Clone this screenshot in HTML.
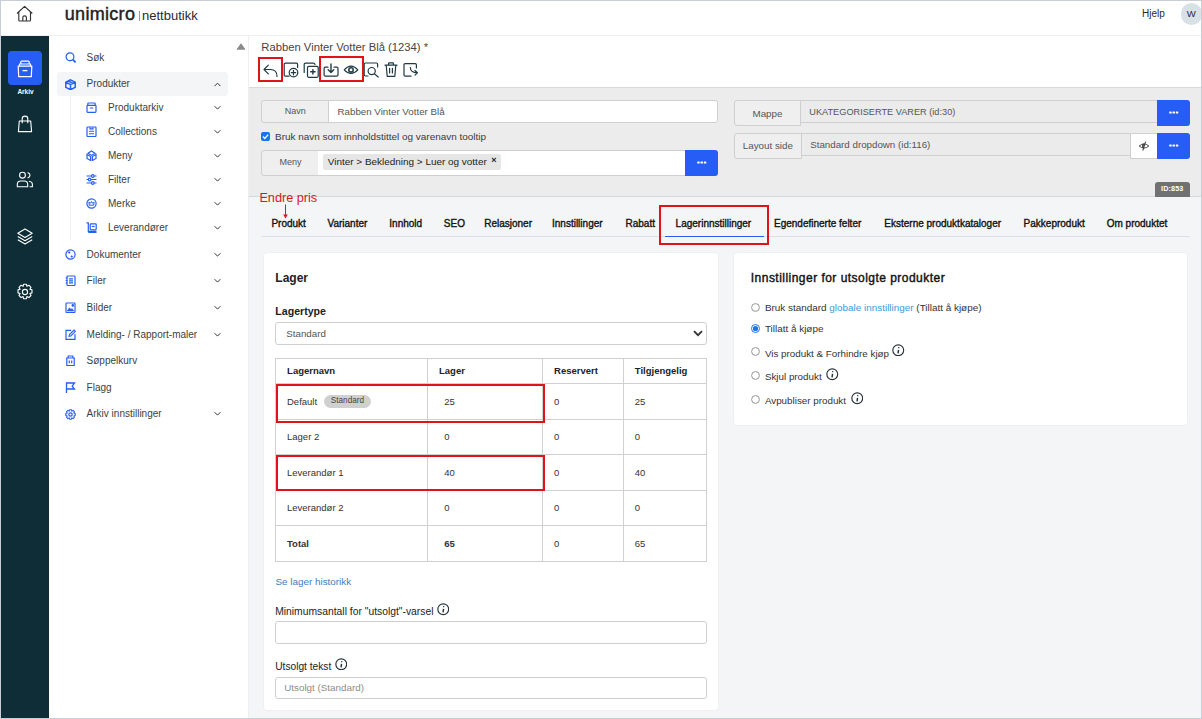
<!DOCTYPE html>
<html><head><meta charset="utf-8">
<style>
*{box-sizing:border-box;margin:0;padding:0}
html,body{width:1202px;height:719px;overflow:hidden;background:#fff}
body{font-family:"Liberation Sans",sans-serif;position:relative;color:#222}
.a{position:absolute}
.t{position:absolute;white-space:nowrap;line-height:1}
#frame{position:absolute;left:0;top:0;width:1202px;height:719px;border:1px solid #c9ced5;pointer-events:none;z-index:50}
#header{position:absolute;left:1px;top:1px;width:1200px;height:35px;background:#fff;border-bottom:1px solid #eceef0}
#side{position:absolute;left:1px;top:36px;width:48px;height:682px;background:#0e2d36}
#nav{position:absolute;left:49px;top:36px;width:200px;height:682px;background:#fff;border-right:1px solid #eceef1}
.nv{position:absolute;font-size:10px;color:#3a3f44;white-space:nowrap;line-height:1}
.chev{position:absolute;width:6px;height:4px}
#main{position:absolute;left:249px;top:36px;width:952px;height:682px;background:#f4f5f7}
</style></head><body>
<div id="frame"></div>
<div id="header">
  <svg class="a" style="left:15px;top:4px" width="18" height="18" viewBox="0 0 18 18" fill="none" stroke="#333" stroke-width="1.15" stroke-linejoin="round"><path d="M1 8.5 L8.6 1.3 L16.3 8.5 M2.8 7 V15 Q2.8 16 3.8 16 H13.5 Q14.5 16 14.5 15 V7 M6.8 16 V12.6 Q6.8 10.8 8.6 10.8 Q10.4 10.8 10.4 12.6 V16"/></svg>
  <div class="t" style="left:63.8px;top:3.6px;font-size:18px;font-weight:400;color:#222;letter-spacing:0.3px;-webkit-text-stroke:0.45px #222">unimicro</div>
  <div class="a" style="left:138px;top:10px;width:1px;height:10px;background:#999"></div>
  <div class="t" style="left:141px;top:8px;font-size:13px;color:#2b2b2b">nettbutikk</div>
  <div class="t" style="left:1141px;top:8.2px;font-size:10px;color:#1e2a3a">Hjelp</div>
  <div class="a" style="left:1179.8px;top:2px;width:21.5px;height:21.5px;border-radius:50%;background:#d8e1e5"></div>
  <div class="t" style="left:1185.8px;top:8.3px;font-size:9.6px;color:#1e2a3a">W</div>
</div>
<div id="side">
  <div class="a" style="left:7px;top:15px;width:34px;height:34px;border-radius:4px;background:#265ef5"></div>
  <svg class="a" style="left:16px;top:23.8px" width="16" height="18" viewBox="0 0 16 18" fill="none" stroke="#fff" stroke-width="1.2" stroke-linejoin="round"><path d="M1.2 6.2 L1.7 16.6 H14.3 L14.8 6.2 Z M3.8 3.9 V2.1 Q3.8 1.2 4.7 1.2 H11.3 Q12.2 1.2 12.2 2.1 V3.9 M2.5 6.2 V4 H13.5 V6.2 M5.6 10.6 H10.4" /></svg>
  <div class="t" style="left:16.4px;top:52.9px;font-size:6.5px;font-weight:700;color:#fff">Arkiv</div>
  <svg class="a" style="left:15px;top:79px" width="18" height="18" viewBox="0 0 18 18" fill="none" stroke="#fff" stroke-width="1.1" stroke-linejoin="round"><path d="M3.3 6 H14.7 L15.6 16.6 H2.4 Z M6.2 8.2 V3.8 Q6.2 1.1 9 1.1 Q11.8 1.1 11.8 3.8 V8.2"/></svg>
  <svg class="a" style="left:15.4px;top:135px" width="18" height="17" viewBox="0 0 18 17" fill="none" stroke="#fff" stroke-width="1.1" stroke-linejoin="round"><circle cx="6.5" cy="4.2" r="2.9"/><path d="M11.6 1.5 Q14 2.3 14 4.2 Q14 6.1 11.6 6.9 M1.3 15.7 V13.5 Q1.3 10 4.8 10 H8.2 Q11.7 10 11.7 13.5 V15.7 Z M12.9 10.2 Q16.4 10.6 16.4 13.5 V15.7 H13.6"/></svg>
  <svg class="a" style="left:15px;top:191.5px" width="18" height="18" viewBox="0 0 18 18" fill="none" stroke="#fff" stroke-width="1.1" stroke-linejoin="round"><path d="M9 1 L16.2 5.2 L9 9.4 L1.8 5.2 Z M1.8 8.5 L9 12.7 L16.2 8.5 M1.8 11.8 L9 16 L16.2 11.8"/></svg>
  <svg class="a" style="left:15px;top:247.3px" width="18" height="18" viewBox="0 0 18 18" fill="none" stroke="#fff" stroke-width="1.1" stroke-linejoin="round"><circle cx="9" cy="9" r="2.6"/><path d="M7.6 1.2 H10.4 L10.9 3.3 L12.9 2.2 L15 4.3 L13.9 6.3 L16 6.9 V9.9 L13.9 10.5 L15 12.5 L12.9 14.6 L10.9 13.5 L10.4 15.8 H7.6 L7.1 13.5 L5.1 14.6 L3 12.5 L4.1 10.5 L2 9.9 V6.9 L4.1 6.3 L3 4.3 L5.1 2.2 L7.1 3.3 Z"/></svg>
</div>
<div id="nav">
<svg class="a" style="left:187px;top:7px" width="10" height="7" viewBox="0 0 10 7"><path d="M5 0.8 L9 6.3 H1 Z" fill="#8a8a8a" stroke="#8a8a8a" stroke-width="0.8" stroke-linejoin="round"/></svg>
<svg class="a" style="left:15.5px;top:16px" width="11" height="11" viewBox="0 0 11 11" fill="none" stroke="#265ef5" stroke-width="1.2"><circle cx="5" cy="4.8" r="3.9"/><path d="M7.8 7.6 L10.6 10.4" stroke-width="1.8"/></svg>
<div class="nv" style="left:37.599999999999994px;top:16.83px">Søk</div>
<div class="a" style="left:8px;top:36px;width:171px;height:24px;border-radius:4px;background:#f4f5f7"></div>
<svg class="a" style="left:15.5px;top:42.5px" width="11" height="11" viewBox="0 0 11 11" fill="none" stroke="#265ef5" stroke-width="1.2"><path d="M5.5 0.8 L10.2 3.2 V8.3 L5.5 10.7 L0.8 8.3 V3.2 Z M0.8 3.2 L5.5 5.6 L10.2 3.2 M5.5 5.6 V10.7 M3.2 2 L7.9 4.4" stroke-width="1.5"/></svg>
<div class="nv" style="left:37.599999999999994px;top:42.73px">Produkter</div>
<svg class="a" style="left:164.7px;top:45.85px" width="7" height="5.3" viewBox="0 0 7 5.3" fill="none" stroke="#333" stroke-width="1"><path d="M0.6 4.1 L3.5 1.2 L6.4 4.1"/></svg>
<div class="a" style="left:21px;top:60px;width:1px;height:144px;background:#eef0f2"></div>
<svg class="a" style="left:36.599999999999994px;top:66.2px" width="11" height="11" viewBox="0 0 11 11" fill="none" stroke="#265ef5" stroke-width="1.2"><rect x="1" y="3.3" width="9" height="7" rx="0.8"/><path d="M1.8 3.3 V1.8 Q1.8 1 2.6 1 H8.4 Q9.2 1 9.2 1.8 V3.3 M3.8 6 H7.2"/></svg>
<div class="nv" style="left:59px;top:66.83px">Produktarkiv</div>
<svg class="a" style="left:164.7px;top:68.75px" width="7" height="5.3" viewBox="0 0 7 5.3" fill="none" stroke="#333" stroke-width="1"><path d="M0.6 1.2 L3.5 4.1 L6.4 1.2"/></svg>
<svg class="a" style="left:36.599999999999994px;top:90.19999999999999px" width="11" height="11" viewBox="0 0 11 11" fill="none" stroke="#265ef5" stroke-width="1.2"><rect x="1" y="1" width="9" height="9.5" rx="0.8"/><path d="M4 1.2 V2.9 H7 V1.2 M2.9 5.3 H8.1 M2.9 7.7 H8.1" stroke-width="1.1"/></svg>
<div class="nv" style="left:59px;top:90.83px">Collections</div>
<svg class="a" style="left:164.7px;top:92.75px" width="7" height="5.3" viewBox="0 0 7 5.3" fill="none" stroke="#333" stroke-width="1"><path d="M0.6 1.2 L3.5 4.1 L6.4 1.2"/></svg>
<svg class="a" style="left:36.599999999999994px;top:114.0px" width="11" height="11" viewBox="0 0 11 11" fill="none" stroke="#265ef5" stroke-width="1.2"><path d="M5.5 1 L9 3.2 L5.5 5.4 L2 3.2 Z M1 4.5 L4.6 6.5 V10.5 L1 8.5 Z M10 4.5 L6.4 6.5 V10.5 L10 8.5 Z"/></svg>
<div class="nv" style="left:59px;top:114.63px">Meny</div>
<svg class="a" style="left:164.7px;top:116.55px" width="7" height="5.3" viewBox="0 0 7 5.3" fill="none" stroke="#333" stroke-width="1"><path d="M0.6 1.2 L3.5 4.1 L6.4 1.2"/></svg>
<svg class="a" style="left:36.599999999999994px;top:138.2px" width="11" height="11" viewBox="0 0 11 11" fill="none" stroke="#265ef5" stroke-width="1.2"><path d="M0.5 2 H10.5 M0.5 5.5 H10.5 M0.5 9 H10.5"/><circle cx="6.8" cy="2" r="1.3" fill="#fff"/><circle cx="3.6" cy="5.5" r="1.3" fill="#fff"/><circle cx="6.8" cy="9" r="1.3" fill="#fff"/></svg>
<div class="nv" style="left:59px;top:138.83px">Filter</div>
<svg class="a" style="left:164.7px;top:140.75px" width="7" height="5.3" viewBox="0 0 7 5.3" fill="none" stroke="#333" stroke-width="1"><path d="M0.6 1.2 L3.5 4.1 L6.4 1.2"/></svg>
<svg class="a" style="left:36.599999999999994px;top:162.4px" width="11" height="11" viewBox="0 0 11 11" fill="none" stroke="#265ef5" stroke-width="1.2"><circle cx="5.5" cy="5.5" r="4.6"/><path d="M3.2 7.2 L3 4 L4.5 5.2 L5.5 3.5 L6.5 5.2 L8 4 L7.8 7.2 Z" stroke-width="1"/></svg>
<div class="nv" style="left:59px;top:163.03px">Merke</div>
<svg class="a" style="left:164.7px;top:164.95px" width="7" height="5.3" viewBox="0 0 7 5.3" fill="none" stroke="#333" stroke-width="1"><path d="M0.6 1.2 L3.5 4.1 L6.4 1.2"/></svg>
<svg class="a" style="left:36.599999999999994px;top:186.0px" width="11" height="11" viewBox="0 0 11 11" fill="none" stroke="#265ef5" stroke-width="1.2"><path d="M0.5 0.8 H2.3 V9.3 H10.5 M2.3 10.5 H10.5"/><rect x="4.2" y="1.8" width="6" height="6" rx="0.8"/><path d="M5.8 4.5 H8.6"/></svg>
<div class="nv" style="left:59px;top:186.63px">Leverandører</div>
<svg class="a" style="left:164.7px;top:188.55px" width="7" height="5.3" viewBox="0 0 7 5.3" fill="none" stroke="#333" stroke-width="1"><path d="M0.6 1.2 L3.5 4.1 L6.4 1.2"/></svg>
<svg class="a" style="left:15.799999999999997px;top:213.2px" width="11" height="11" viewBox="0 0 11 11" fill="none" stroke="#265ef5" stroke-width="1.2"><circle cx="5.5" cy="5.5" r="4.6"/><path d="M3.5 2.8 L5 4.2 M6 6.8 L7.5 8.2" stroke-width="1.8"/></svg>
<div class="nv" style="left:37.599999999999994px;top:213.84px">Dokumenter</div>
<svg class="a" style="left:164.7px;top:215.75px" width="7" height="5.3" viewBox="0 0 7 5.3" fill="none" stroke="#333" stroke-width="1"><path d="M0.6 1.2 L3.5 4.1 L6.4 1.2"/></svg>
<svg class="a" style="left:15.799999999999997px;top:239.10000000000002px" width="11" height="11" viewBox="0 0 11 11" fill="none" stroke="#265ef5" stroke-width="1.2"><rect x="2" y="1" width="8" height="9.5" rx="0.8"/><path d="M0.6 3 H2.4 M0.6 5.5 H2.4 M0.6 8 H2.4 M4 3.8 H8 M4 5.8 H8 M4 7.8 H8"/></svg>
<div class="nv" style="left:37.599999999999994px;top:239.74px">Filer</div>
<svg class="a" style="left:164.7px;top:241.65px" width="7" height="5.3" viewBox="0 0 7 5.3" fill="none" stroke="#333" stroke-width="1"><path d="M0.6 1.2 L3.5 4.1 L6.4 1.2"/></svg>
<svg class="a" style="left:15.799999999999997px;top:266.1px" width="11" height="11" viewBox="0 0 11 11" fill="none" stroke="#265ef5" stroke-width="1.2"><rect x="1" y="1" width="9" height="9.5" rx="0.8"/><path d="M2.2 9 L4.5 5.8 L6 7.5 L7 6.5 L8.8 9 Z" fill="#265ef5" stroke-width="0.6"/><circle cx="7.8" cy="3.4" r="0.7" fill="#265ef5"/></svg>
<div class="nv" style="left:37.599999999999994px;top:266.74px">Bilder</div>
<svg class="a" style="left:164.7px;top:268.65px" width="7" height="5.3" viewBox="0 0 7 5.3" fill="none" stroke="#333" stroke-width="1"><path d="M0.6 1.2 L3.5 4.1 L6.4 1.2"/></svg>
<svg class="a" style="left:15.799999999999997px;top:293.1px" width="11" height="11" viewBox="0 0 11 11" fill="none" stroke="#265ef5" stroke-width="1.2"><path d="M6 1.3 H1 V10.3 H10 V5.3"/><path d="M4 7.3 L4.4 5.6 L9 1 L10.4 2.4 L5.8 7 Z" stroke-width="1.1"/></svg>
<div class="nv" style="left:37.599999999999994px;top:293.74px">Melding- / Rapport-maler</div>
<svg class="a" style="left:164.7px;top:295.65px" width="7" height="5.3" viewBox="0 0 7 5.3" fill="none" stroke="#333" stroke-width="1"><path d="M0.6 1.2 L3.5 4.1 L6.4 1.2"/></svg>
<svg class="a" style="left:15.799999999999997px;top:319.3px" width="11" height="11" viewBox="0 0 11 11" fill="none" stroke="#265ef5" stroke-width="1.2"><path d="M1 3 H10 M3.2 3 V1 H7.8 V3 M1.8 3 V10.5 H9.2 V3 M4.3 5.5 V8.3 M6.7 5.5 V8.3"/></svg>
<div class="nv" style="left:37.599999999999994px;top:319.94px">Søppelkurv</div>
<svg class="a" style="left:15.799999999999997px;top:346.3px" width="11" height="11" viewBox="0 0 11 11" fill="none" stroke="#265ef5" stroke-width="1.2"><path d="M1.5 11 V1 H9.5 L7.2 4.2 L9.5 7 H1.5" stroke-width="1.3"/></svg>
<div class="nv" style="left:37.599999999999994px;top:346.94px">Flagg</div>
<svg class="a" style="left:15.799999999999997px;top:372.8px" width="11" height="11" viewBox="0 0 11 11" fill="none" stroke="#265ef5" stroke-width="1.2"><circle cx="5.5" cy="5.5" r="1.7"/><path d="M4.6 0.8 H6.4 L6.8 2.1 L8.1 1.4 L9.5 2.8 L8.8 4.1 L10.2 4.6 V6.4 L8.8 6.9 L9.5 8.2 L8.1 9.6 L6.8 8.9 L6.4 10.2 H4.6 L4.2 8.9 L2.9 9.6 L1.5 8.2 L2.2 6.9 L0.8 6.4 V4.6 L2.2 4.1 L1.5 2.8 L2.9 1.4 L4.2 2.1 Z" stroke-width="1.1" stroke-linejoin="round"/></svg>
<div class="nv" style="left:37.599999999999994px;top:373.44px">Arkiv innstillinger</div>
<svg class="a" style="left:164.7px;top:375.35px" width="7" height="5.3" viewBox="0 0 7 5.3" fill="none" stroke="#333" stroke-width="1"><path d="M0.6 1.2 L3.5 4.1 L6.4 1.2"/></svg>
</div>
<div id="main"></div>

<div class="a" style="left:249px;top:36px;width:952px;height:52px;background:#fff;border-bottom:1px solid #d9d9d9"></div>
<div class="a" style="left:249px;top:88px;width:952px;height:109px;background:#ececec;border-bottom:1px solid #d8d8d8"></div>
<div class="t" style="left:261.3px;top:41.90px;font-size:11.25px;color:#444">Rabben Vinter Votter Blå (1234) *</div>
<svg class="a" style="left:255px;top:55px" width="170" height="30" viewBox="255 55 170 30" fill="none" stroke="#1f3a44" stroke-width="1.2" stroke-linecap="round" stroke-linejoin="round">
 <path d="M268.3 65.2 L264 69.5 L268.3 73.8 M264 69.5 H270.5 Q277 69.5 277 76.5"/>
 <path d="M289 76.2 H285.5 Q284.2 76.2 284.2 75 V64.3 Q284.2 63.1 285.5 63.1 H296.3 Q297.6 63.1 297.6 64.3 V67.5"/>
 <circle cx="293.5" cy="72.6" r="4.3"/><path d="M293.5 70.4 V74.8 M291.3 72.6 H295.7"/>
 <path d="M304.2 72.5 V64.3 Q304.2 63.1 305.4 63.1 H313.5 Q314.6 63.1 315 64.5"/>
 <rect x="307.5" y="66.3" width="10.7" height="11" rx="1.2"/><path d="M312.9 69.6 V74 M310.7 71.8 H315.1" stroke-width="1.4"/>
 <path d="M328 67.2 H325.3 Q324.1 67.2 324.1 68.4 V74.9 Q324.1 76.1 325.3 76.1 H336.8 Q338 76.1 338 74.9 V68.4 Q338 67.2 336.8 67.2 H334"/>
 <path d="M331 64 V72.5 M328.2 69.8 L331 72.6 L333.8 69.8" stroke-width="1.4"/>
 <path d="M344.2 69.8 Q351 62.6 357.8 69.8 Q351 77 344.2 69.8 Z"/><circle cx="351" cy="69.9" r="2.2" stroke-width="1.5"/>
 <path d="M368 76 H365.4 Q364.2 76 364.2 74.8 V64.2 Q364.2 63 365.4 63 H376.4 Q377.6 63 377.6 64.2 V67"/>
 <circle cx="371.7" cy="71.1" r="3.6"/><path d="M374.4 73.8 L378.2 77"/>
 <path d="M385 65.2 H397 M388.6 65.2 V63.4 Q388.6 62.9 389.1 62.9 H392.9 Q393.4 62.9 393.4 63.4 V65.2 M386.2 65.2 L387.2 76.3 H394.8 L395.8 65.2 M389.6 68.3 V73 M392.4 68.3 V73"/>
 <path d="M416.4 68 V64.8 Q416.4 63.6 415.2 63.6 H405.2 Q404 63.6 404 64.8 V75 Q404 76.2 405.2 76.2 H411"/>
 <path d="M410.3 67.6 Q410.5 72.8 417.2 72.8 M415 70.5 L417.4 72.8 L415 75.2"/>
</svg>
<div class="a" style="left:261px;top:100px;width:68px;height:23px;background:#efefef;border:1px solid #cfcfcf;border-radius:3px 0 0 3px"></div>
<div class="a" style="left:328px;top:100px;width:390px;height:23px;background:#fff;border:1px solid #cfcfcf;border-radius:0 3px 3px 0"></div>
<div class="t" style="left:284.8px;top:107.28px;font-size:9px;color:#555;font-weight:400;">Navn</div>
<div class="t" style="left:337.5px;top:106.75px;font-size:9.75px;color:#555;font-weight:400;">Rabben Vinter Votter Blå</div>
<div class="a" style="left:261px;top:132px;width:9px;height:9px;background:#1a73e8;border-radius:2px"></div>
<svg class="a" style="left:261px;top:132px" width="9" height="9" viewBox="0 0 9 9"><path d="M2 4.6 L3.8 6.4 L7.2 2.6" fill="none" stroke="#fff" stroke-width="1.4"/></svg>
<div class="t" style="left:275px;top:131.78px;font-size:9.95px;color:#3a3a3a;font-weight:400;">Bruk navn som innholdstittel og varenavn tooltip</div>
<div class="a" style="left:261px;top:150px;width:58px;height:26px;background:#efefef;border:1px solid #cfcfcf;border-radius:3px 0 0 3px"></div>
<div class="a" style="left:318px;top:150px;width:368px;height:26px;background:#fff;border:1px solid #cfcfcf;border-left:none"></div>
<div class="t" style="left:279.5px;top:158.38px;font-size:9px;color:#555;font-weight:400;">Meny</div>
<div class="a" style="left:323px;top:154px;width:178px;height:16px;background:#e6e6e6;border-radius:2px"></div>
<div class="t" style="left:327.8px;top:157.28px;font-size:9.95px;color:#222;font-weight:400;">Vinter &gt; Bekledning &gt; Luer og votter</div>
<div class="t" style="left:491.2px;top:156.38px;font-size:9px;color:#222;font-weight:700;">×</div>
<div class="a" style="left:685px;top:150px;width:33px;height:26px;background:#265ef5;border-radius:0 3px 3px 0"></div>
<svg class="a" style="left:697.3px;top:160.7px" width="10" height="3" viewBox="0 0 10 3" fill="#fff"><rect x="0.2" y="0.6" width="2.5" height="1.9" rx="0.5"/><rect x="3.5" y="0.6" width="2.5" height="1.9" rx="0.5"/><rect x="6.8" y="0.6" width="2.5" height="1.9" rx="0.5"/></svg>
<div class="a" style="left:734px;top:100px;width:67px;height:26px;background:#efefef;border:1px solid #cfcfcf;border-radius:3px 0 0 3px"></div>
<div class="a" style="left:800px;top:100px;width:358px;height:23px;background:#ebebeb;border:1px solid #cfcfcf"></div>
<div class="t" style="left:752.5px;top:109.30px;font-size:9.8px;color:#555;font-weight:400;">Mappe</div>
<div class="t" style="left:809.3px;top:107.91px;font-size:9.2px;color:#555;font-weight:400;">UKATEGORISERTE VARER (id:30)</div>
<div class="a" style="left:1157px;top:100px;width:33px;height:26px;background:#265ef5;border-radius:0 3px 3px 0"></div>
<svg class="a" style="left:1169.3px;top:110.7px" width="10" height="3" viewBox="0 0 10 3" fill="#fff"><rect x="0.2" y="0.6" width="2.5" height="1.9" rx="0.5"/><rect x="3.5" y="0.6" width="2.5" height="1.9" rx="0.5"/><rect x="6.8" y="0.6" width="2.5" height="1.9" rx="0.5"/></svg>
<div class="a" style="left:734px;top:133px;width:68px;height:26px;background:#efefef;border:1px solid #cfcfcf;border-radius:3px 0 0 3px"></div>
<div class="a" style="left:801px;top:133px;width:330px;height:23px;background:#ebebeb;border:1px solid #cfcfcf"></div>
<div class="t" style="left:742.8px;top:140.90px;font-size:9.8px;color:#555;font-weight:400;">Layout side</div>
<div class="t" style="left:810.2px;top:140.24px;font-size:9.76px;color:#555;font-weight:400;">Standard dropdown (id:116)</div>
<div class="a" style="left:1130px;top:133px;width:28px;height:26px;background:#fff;border:1px solid #cfcfcf;border-right:none"></div>
<svg class="a" style="left:1138px;top:139.5px" width="12" height="12" viewBox="0 0 12 12" fill="none" stroke="#333" stroke-width="0.9"><path d="M1.2 6 Q6 1.8 10.8 6 Q6 10.2 1.2 6 Z"/><path d="M6.2 3.6 Q4.2 3.6 3.8 6 Q4.2 8 5.4 8.3 Z" fill="#444" stroke="none"/><path d="M7.6 1.6 L4.8 10.6" stroke-width="1"/></svg>
<div class="a" style="left:1157px;top:133px;width:33px;height:26px;background:#265ef5;border-radius:0 3px 3px 0"></div>
<svg class="a" style="left:1169.3px;top:143.7px" width="10" height="3" viewBox="0 0 10 3" fill="#fff"><rect x="0.2" y="0.6" width="2.5" height="1.9" rx="0.5"/><rect x="3.5" y="0.6" width="2.5" height="1.9" rx="0.5"/><rect x="6.8" y="0.6" width="2.5" height="1.9" rx="0.5"/></svg>
<div class="a" style="left:1155px;top:182px;width:35px;height:15px;background:#717171;border-radius:3px 3px 0 0"></div>
<div class="t" style="left:1161px;top:185.21px;font-size:7.2px;color:#fff;font-weight:700;letter-spacing:0.15px">ID:853</div>
<div class="t" style="left:259.4px;top:191.95px;font-size:12.7px;color:#e0131b;font-weight:400;">Endre pris</div>
<svg class="a" style="left:282px;top:204px" width="7" height="15" viewBox="0 0 7 15"><path d="M3.5 0.5 V13" stroke="#e0131b" stroke-width="1"/><path d="M1.2 10.5 L3.5 14.5 L5.8 10.5 Z" fill="#e0131b"/></svg>
<div class="a" style="left:258px;top:57px;width:25px;height:25px;border:2px solid #e0131b"></div>
<div class="a" style="left:319px;top:56px;width:45px;height:26px;border:2px solid #e0131b"></div>

<div class="a" style="left:261px;top:236px;width:929px;height:1px;background:#dcdfe3"></div>
<div class="t" style="left:271.4px;top:218.73px;font-size:10px;color:#111;font-weight:400;-webkit-text-stroke:0.35px #111">Produkt</div>
<div class="t" style="left:327.5px;top:218.73px;font-size:10px;color:#111;font-weight:400;-webkit-text-stroke:0.35px #111">Varianter</div>
<div class="t" style="left:389.3px;top:218.73px;font-size:10px;color:#111;font-weight:400;-webkit-text-stroke:0.35px #111">Innhold</div>
<div class="t" style="left:443.8px;top:218.73px;font-size:10px;color:#111;font-weight:400;-webkit-text-stroke:0.35px #111">SEO</div>
<div class="t" style="left:484.2px;top:218.73px;font-size:10px;color:#111;font-weight:400;-webkit-text-stroke:0.35px #111">Relasjoner</div>
<div class="t" style="left:552px;top:218.73px;font-size:10px;color:#111;font-weight:400;-webkit-text-stroke:0.35px #111">Innstillinger</div>
<div class="t" style="left:625.5px;top:218.73px;font-size:10px;color:#111;font-weight:400;-webkit-text-stroke:0.35px #111">Rabatt</div>
<div class="t" style="left:675.6px;top:218.73px;font-size:10px;color:#111;font-weight:400;-webkit-text-stroke:0.35px #111">Lagerinnstillinger</div>
<div class="t" style="left:774px;top:218.73px;font-size:10px;color:#111;font-weight:400;-webkit-text-stroke:0.35px #111">Egendefinerte felter</div>
<div class="t" style="left:884.3px;top:218.73px;font-size:10px;color:#111;font-weight:400;-webkit-text-stroke:0.35px #111">Eksterne produktkataloger</div>
<div class="t" style="left:1023.6px;top:218.73px;font-size:10px;color:#111;font-weight:400;-webkit-text-stroke:0.35px #111">Pakkeprodukt</div>
<div class="t" style="left:1106.7px;top:218.73px;font-size:10px;color:#111;font-weight:400;-webkit-text-stroke:0.35px #111">Om produktet</div>
<div class="a" style="left:665px;top:236px;width:99px;height:1px;background:#2a5cf2"></div>
<div class="a" style="left:659px;top:205px;width:110px;height:40px;border:2px solid #e0131b"></div>
<div class="a" style="left:264px;top:253px;width:454px;height:457px;background:#fff;border-radius:3.5px;box-shadow:0 0 0 1px #eef0f2"></div>
<div class="t" style="left:275.3px;top:271.84px;font-size:12px;color:#222;font-weight:700;">Lager</div>
<div class="t" style="left:275.3px;top:306.33px;font-size:10.6px;color:#222;font-weight:700;">Lagertype</div>
<div class="a" style="left:275px;top:322px;width:432px;height:23px;background:#fff;border:1px solid #cfcfcf;border-radius:3px"></div>
<div class="t" style="left:286.3px;top:328.75px;font-size:9.75px;color:#555;font-weight:400;">Standard</div>
<svg class="a" style="left:693px;top:330px" width="10" height="7" viewBox="0 0 10 7"><path d="M1 1.2 L5 5.2 L9 1.2" fill="none" stroke="#333" stroke-width="1.8"/></svg>
<div class="a" style="left:275px;top:358px;width:432px;height:204px;border:1px solid #d0d0d0"></div>
<div class="a" style="left:427px;top:358px;width:1px;height:204px;background:#d0d0d0"></div>
<div class="a" style="left:542px;top:358px;width:1px;height:204px;background:#d0d0d0"></div>
<div class="a" style="left:623px;top:358px;width:1px;height:204px;background:#d0d0d0"></div>
<div class="a" style="left:275px;top:383px;width:432px;height:1px;background:#d0d0d0"></div>
<div class="a" style="left:275px;top:419px;width:432px;height:1px;background:#d0d0d0"></div>
<div class="a" style="left:275px;top:454px;width:432px;height:1px;background:#d0d0d0"></div>
<div class="a" style="left:275px;top:490px;width:432px;height:1px;background:#d0d0d0"></div>
<div class="a" style="left:275px;top:525px;width:432px;height:1px;background:#d0d0d0"></div>
<div class="t" style="left:287.1px;top:366.16px;font-size:9.5px;color:#222;font-weight:700;">Lagernavn</div>
<div class="t" style="left:439px;top:366.16px;font-size:9.5px;color:#222;font-weight:700;">Lager</div>
<div class="t" style="left:554.1px;top:366.16px;font-size:9.5px;color:#222;font-weight:700;">Reservert</div>
<div class="t" style="left:634.8px;top:366.16px;font-size:9.5px;color:#222;font-weight:700;">Tilgjengelig</div>
<div class="t" style="left:287px;top:396.86px;font-size:9.5px;color:#333;font-weight:400;">Default</div>
<div class="t" style="left:444.2px;top:396.86px;font-size:9.5px;color:#333;font-weight:400;">25</div>
<div class="t" style="left:554px;top:396.86px;font-size:9.5px;color:#333;font-weight:400;">0</div>
<div class="t" style="left:634.8px;top:396.86px;font-size:9.5px;color:#333;font-weight:400;">25</div>
<div class="t" style="left:287px;top:432.26px;font-size:9.5px;color:#333;font-weight:400;">Lager 2</div>
<div class="t" style="left:444.2px;top:432.26px;font-size:9.5px;color:#333;font-weight:400;">0</div>
<div class="t" style="left:554px;top:432.26px;font-size:9.5px;color:#333;font-weight:400;">0</div>
<div class="t" style="left:634.8px;top:432.26px;font-size:9.5px;color:#333;font-weight:400;">0</div>
<div class="t" style="left:287px;top:467.86px;font-size:9.5px;color:#333;font-weight:400;">Leverandør 1</div>
<div class="t" style="left:444.2px;top:467.86px;font-size:9.5px;color:#333;font-weight:400;">40</div>
<div class="t" style="left:554px;top:467.86px;font-size:9.5px;color:#333;font-weight:400;">0</div>
<div class="t" style="left:634.8px;top:467.86px;font-size:9.5px;color:#333;font-weight:400;">40</div>
<div class="t" style="left:287px;top:503.46px;font-size:9.5px;color:#333;font-weight:400;">Leverandør 2</div>
<div class="t" style="left:444.2px;top:503.46px;font-size:9.5px;color:#333;font-weight:400;">0</div>
<div class="t" style="left:554px;top:503.46px;font-size:9.5px;color:#333;font-weight:400;">0</div>
<div class="t" style="left:634.8px;top:503.46px;font-size:9.5px;color:#333;font-weight:400;">0</div>
<div class="t" style="left:287px;top:539.06px;font-size:9.5px;color:#333;font-weight:700;">Total</div>
<div class="t" style="left:444.2px;top:539.06px;font-size:9.5px;color:#333;font-weight:700;">65</div>
<div class="t" style="left:554px;top:539.06px;font-size:9.5px;color:#333;font-weight:400;">0</div>
<div class="t" style="left:634.8px;top:539.06px;font-size:9.5px;color:#333;font-weight:400;">65</div>
<div class="a" style="left:324px;top:395px;width:47px;height:13px;background:#d0d0d0;border-radius:7px"></div>
<div class="t" style="left:330.8px;top:396.76px;font-size:8.2px;color:#444;font-weight:400;">Standard</div>
<div class="a" style="left:276px;top:384px;width:269px;height:39px;border:2px solid #e0131b"></div>
<div class="a" style="left:276px;top:455px;width:269px;height:36px;border:2px solid #e0131b"></div>
<div class="t" style="left:275.5px;top:577.15px;font-size:9.87px;color:#3b7dc4;font-weight:400;">Se lager historikk</div>
<div class="t" style="left:275.2px;top:607.26px;font-size:10.33px;color:#222;font-weight:400;">Minimumsantall for "utsolgt"-varsel</div>
<svg class="a" style="left:436.7px;top:603.0px" width="12.5" height="12.5" viewBox="0 0 12 12" fill="none" stroke="#263238" stroke-width="1.1"><circle cx="6" cy="6" r="5.2"/><path d="M6.3 5.6 L5.8 8.9" stroke-width="1.4"/><path d="M5.9 3.5 H7" stroke-width="1.3"/></svg>
<div class="a" style="left:275px;top:621px;width:432px;height:23px;background:#fff;border:1px solid #cfcfcf;border-radius:3px"></div>
<div class="t" style="left:275.2px;top:662.17px;font-size:10.2px;color:#222;font-weight:400;">Utsolgt tekst</div>
<svg class="a" style="left:334.7px;top:657.7px" width="12.5" height="12.5" viewBox="0 0 12 12" fill="none" stroke="#263238" stroke-width="1.1"><circle cx="6" cy="6" r="5.2"/><path d="M6.3 5.6 L5.8 8.9" stroke-width="1.4"/><path d="M5.9 3.5 H7" stroke-width="1.3"/></svg>
<div class="a" style="left:275px;top:677px;width:432px;height:22px;background:#fff;border:1px solid #cfcfcf;border-radius:3px"></div>
<div class="t" style="left:284.2px;top:683.08px;font-size:9.83px;color:#8c8c8c;font-weight:400;">Utsolgt (Standard)</div>
<div class="a" style="left:734px;top:253px;width:453px;height:172px;background:#fff;border-radius:3.5px;box-shadow:0 0 0 1px #eef0f2"></div>
<div class="t" style="left:750.8px;top:271.55px;font-size:12px;color:#111;font-weight:400;letter-spacing:0.47px;-webkit-text-stroke:0.4px #111">Innstillinger for utsolgte produkter</div>
<svg class="a" style="left:750.8px;top:302.8px" width="9" height="9" viewBox="0 0 9 9"><circle cx="4.5" cy="4.5" r="3.9" fill="#fff" stroke="#8a8a8a" stroke-width="0.9"/></svg>
<svg class="a" style="left:750.8px;top:324.4px" width="9" height="9" viewBox="0 0 9 9"><circle cx="4.5" cy="4.5" r="4" fill="#fff" stroke="#1a73e8" stroke-width="1"/><circle cx="4.5" cy="4.5" r="2.6" fill="#1a73e8"/></svg>
<svg class="a" style="left:750.8px;top:346.5px" width="9" height="9" viewBox="0 0 9 9"><circle cx="4.5" cy="4.5" r="3.9" fill="#fff" stroke="#8a8a8a" stroke-width="0.9"/></svg>
<svg class="a" style="left:750.8px;top:370.5px" width="9" height="9" viewBox="0 0 9 9"><circle cx="4.5" cy="4.5" r="3.9" fill="#fff" stroke="#8a8a8a" stroke-width="0.9"/></svg>
<svg class="a" style="left:750.8px;top:394.7px" width="9" height="9" viewBox="0 0 9 9"><circle cx="4.5" cy="4.5" r="3.9" fill="#fff" stroke="#8a8a8a" stroke-width="0.9"/></svg>
<div class="t" style="left:764.9px;top:302.90px;font-size:9.92px;color:#333;font-weight:400;">Bruk standard <span style="color:#3a9ad9">globale innstillinger</span> (Tillatt å kjøpe)</div>
<div class="t" style="left:764.9px;top:323.90px;font-size:9.92px;color:#333;font-weight:400;">Tillatt å kjøpe</div>
<div class="t" style="left:764.9px;top:348.79px;font-size:9.82px;color:#333;font-weight:400;">Vis produkt &amp; Forhindre kjøp</div>
<div class="t" style="left:764.9px;top:372.19px;font-size:9.82px;color:#333;font-weight:400;">Skjul produkt</div>
<div class="t" style="left:764.9px;top:396.39px;font-size:9.82px;color:#333;font-weight:400;">Avpubliser produkt</div>
<svg class="a" style="left:892.4px;top:343.5px" width="12.5" height="12.5" viewBox="0 0 12 12" fill="none" stroke="#263238" stroke-width="1.1"><circle cx="6" cy="6" r="5.2"/><path d="M6.3 5.6 L5.8 8.9" stroke-width="1.4"/><path d="M5.9 3.5 H7" stroke-width="1.3"/></svg>
<svg class="a" style="left:826.0px;top:368.2px" width="12.5" height="12.5" viewBox="0 0 12 12" fill="none" stroke="#263238" stroke-width="1.1"><circle cx="6" cy="6" r="5.2"/><path d="M6.3 5.6 L5.8 8.9" stroke-width="1.4"/><path d="M5.9 3.5 H7" stroke-width="1.3"/></svg>
<svg class="a" style="left:850.9px;top:392.1px" width="12.5" height="12.5" viewBox="0 0 12 12" fill="none" stroke="#263238" stroke-width="1.1"><circle cx="6" cy="6" r="5.2"/><path d="M6.3 5.6 L5.8 8.9" stroke-width="1.4"/><path d="M5.9 3.5 H7" stroke-width="1.3"/></svg>
</body></html>
